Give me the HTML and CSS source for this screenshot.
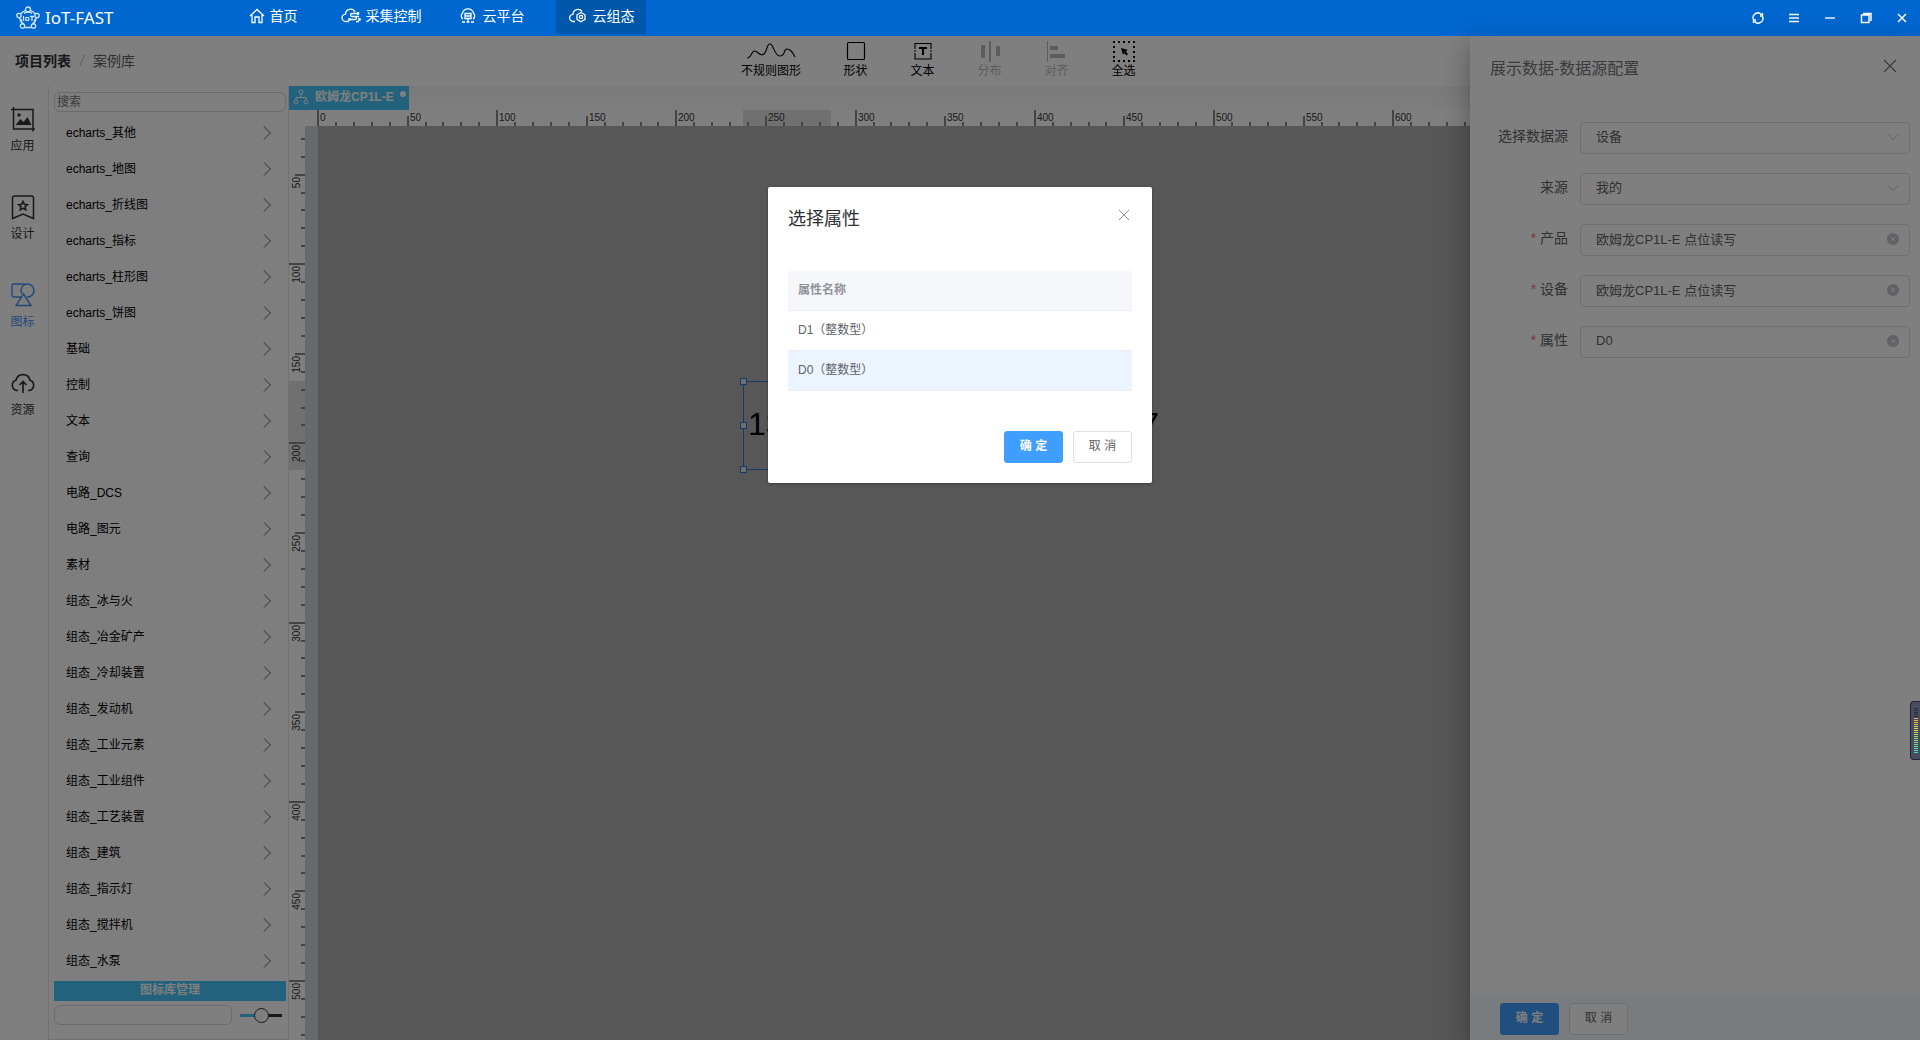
FILE: index.html
```html
<!DOCTYPE html>
<html lang="zh-CN">
<head>
<meta charset="utf-8">
<title>IoT-FAST</title>
<link rel="stylesheet" href="styles.css">
</head>
<body>
<header class="topbar">
  <a class="brand" href="#">
    <svg class="brand-icon" viewBox="0 0 24 24" fill="none" stroke="currentColor" stroke-width="1.300">
      <path d="M9 4.500L4 8M15 4.500L20 8M3.500 12L6 18M20.500 12L18 18M9 21.500h6M8 7.500c2-2 6-2 8 0M5 13c0 3 1 4 3 5M19 13c0 3-1 4-3 5"/>
      <circle cx="12" cy="3.500" r="2.500"/><circle cx="3" cy="9.500" r="2.200"/><circle cx="21" cy="9.500" r="2.200"/><circle cx="6.500" cy="20" r="2.200"/><circle cx="17.500" cy="20" r="2.200"/>
      <path d="M7.500 10v5M14 10.500h4M16 10.500V15"/><circle cx="11.300" cy="13" r="1.700"/>
    </svg>
    <span>IoT-FAST</span>
  </a>
  <nav class="nav">
    <a href="#"><svg viewBox="0 0 20 16" fill="none" stroke="currentColor" stroke-width="1.300"><path d="M5 8L12 1.500 19 8M7 7v7.500h3V9h4v5.500h3V7"/></svg>首页</a>
    <a href="#"><svg viewBox="0 0 20 16" fill="none" stroke="currentColor" stroke-width="1.300"><path d="M8 13.500H5a3.700 3.700 0 0 1-.5-7.400A5 5 0 0 1 14 4M16 5.500h-5a1.500 1.500 0 0 0 0 3h3a1.500 1.500 0 0 1 0 3H9M15 8.500h3M15 13.500h3"/><circle cx="17" cy="5.500" r=".8"/><circle cx="8.500" cy="11.500" r=".8"/><circle cx="18.500" cy="11.500" r=".8"/></svg>采集控制</a>
    <a href="#"><svg viewBox="0 0 20 16" fill="none" stroke="currentColor" stroke-width="1.300"><path d="M5 11A3.800 3.800 0 0 1 4.500 5 5.700 5.700 0 0 1 15.500 5 3.800 3.800 0 0 1 15 11M7 5.500h6v5H7zM7 8h6M10 10.500v3M4 14h3M8.500 14h3M13 14h3"/></svg>云平台</a>
    <a href="#" class="active"><svg viewBox="0 0 20 16" fill="none" stroke="currentColor" stroke-width="1.300"><path d="M7 13.500H5.500A3.600 3.600 0 0 1 5 6.300 5 5 0 0 1 14 3.500M13 4.500l4 2.300v4.600l-4 2.300-4-2.300V6.800z"/><circle cx="13" cy="9" r="1.600"/></svg>云组态</a>
  </nav>
  <div class="window-tools">
    <button aria-label="刷新"><svg viewBox="0 0 12 12" fill="none" stroke="currentColor" stroke-width="1.400"><path d="M1.500 7.500A4.700 4.700 0 0 1 9.500 2.700M10.500 4.500A4.700 4.700 0 0 1 2.500 9.300M10.500 1v3H8M1.500 11V8H4"/></svg></button>
    <button aria-label="菜单"><svg viewBox="0 0 12 12" fill="none" stroke="currentColor" stroke-width="1.300"><path d="M1 2.500h10M1 6h10M1 9.500h10"/></svg></button>
    <button aria-label="最小化"><svg viewBox="0 0 12 12" fill="none" stroke="currentColor" stroke-width="1.400"><path d="M1 6h10"/></svg></button>
    <button aria-label="还原"><svg viewBox="0 0 12 12" fill="none" stroke="currentColor" stroke-width="1.500"><path d="M1.500 3h7.500v7.500H1.500zM3 1.500h8V9"/></svg></button>
    <button aria-label="关闭"><svg viewBox="0 0 12 12" fill="none" stroke="currentColor" stroke-width="1.500"><path d="M2 2l8 8M10 2l-8 8"/></svg></button>
  </div>
</header>

<main class="workspace">
  <div class="toolbar">
    <div class="crumbs"><a href="#">项目列表</a><i>/</i><span>案例库</span></div>
    <div class="tools">
      <button class="wide"><svg viewBox="0 0 50 24" width="50" height="24" fill="none" stroke="currentColor" stroke-width="1.100"><path d="M1 19C6 19 5 11 9 12S14 18 18 15 20 5 24 5 28 17 34 17 37 10 41 10 47 14 49 18"/></svg>不规则图形</button>
      <button><svg viewBox="0 0 24 24" width="24" height="24" fill="none" stroke="currentColor" stroke-width="1.200"><rect x="3.500" y="3.500" width="17" height="17" rx="1"/></svg>形状</button>
      <button><svg viewBox="0 0 24 24" width="24" height="24" fill="none" stroke="currentColor" stroke-width="1.100"><path d="M4 10V4.500h16V10M4 14v6h16v-6M3 12h2M19 12h2"/><path stroke-width="2" d="M8 9h8M12 9v7"/></svg>文本</button>
      <button disabled><svg viewBox="0 0 24 24" width="24" height="24" fill="currentColor"><path d="M3 6h4v13H3zM11 2h2v21h-2zM18 7h4v10h-4z"/></svg>分布</button>
      <button disabled><svg viewBox="0 0 24 24" width="24" height="24" fill="currentColor"><path d="M2 2h1v21H2zM5 7h8v4H5zM5 15h15v4H5z"/></svg>对齐</button>
      <button><svg viewBox="0 0 24 24" width="24" height="24" fill="none" stroke="currentColor" stroke-width="2"><path stroke-dasharray="2 3" d="M1 3h22M1 22h22M2 2v21M22 2v21"/><path fill="currentColor" stroke="none" d="M9 9l7 2-2.300 1.300L16 15l-1.500 1.500L12 14l-1 2z"/></svg>全选</button>
    </div>
  </div>

  <div class="body">
    <nav class="rail">
      <a href="#"><svg viewBox="0 0 24 24" fill="none" stroke="currentColor" stroke-width="1.500"><path d="M2.500 0v22H24M0 2.500h22v22"/><path fill="currentColor" stroke="none" d="M4.500 18l5-6 3 3 4-5 4 8z"/><circle cx="8" cy="8" r="1.700" fill="currentColor" stroke="none"/></svg>应用</a>
      <a href="#"><svg viewBox="0 0 24 24" fill="none" stroke="currentColor" stroke-width="1.500"><path d="M1.500 2.500a2 2 0 0 1 2-1.500h17a2 2 0 0 1 2 1.500V23.500L12 19 1.500 23.500z"/><path stroke-width="1.600" d="M12 6.500l1.300 2.800 3 .4-2.200 2 .6 3-2.700-1.400-2.700 1.400.6-3-2.200-2 3-.4z"/></svg>设计</a>
      <a href="#" class="active"><svg viewBox="0 0 24 24" fill="none" stroke="currentColor" stroke-width="1.400"><path d="M10 14H2.500a1.500 1.500 0 0 1-1.500-1.500v-10A1.500 1.500 0 0 1 2.500 1H14M12.500 11L20 22.500H5z"/><path d="M11 11A6.500 6.500 0 1 1 16 14"/></svg>图标</a>
      <a href="#"><svg viewBox="0 0 24 24" fill="none" stroke="currentColor" stroke-width="1.700"><path d="M7 19.500H6A5.300 5.300 0 0 1 5 9.200a7.200 7.200 0 0 1 14 0 5.300 5.300 0 0 1-1 10.300h-1M12 22V11M8.500 14l3.500-3.500 3.500 3.500"/></svg>资源</a>
    </nav>

    <aside class="library">
      <input class="search" type="text" placeholder="搜索" aria-label="搜索">
      <ul class="groups">
        <li>echarts_其他</li><li>echarts_地图</li><li>echarts_折线图</li><li>echarts_指标</li><li>echarts_柱形图</li><li>echarts_饼图</li>
        <li>基础</li><li>控制</li><li>文本</li><li>查询</li><li>电路_DCS</li><li>电路_图元</li><li>素材</li>
        <li>组态_冰与火</li><li>组态_冶金矿产</li><li>组态_冷却装置</li><li>组态_发动机</li><li>组态_工业元素</li><li>组态_工业组件</li><li>组态_工艺装置</li><li>组态_建筑</li><li>组态_指示灯</li><li>组态_搅拌机</li><li>组态_水泵</li>
      </ul>
      <button class="manage">图标库管理</button>
      <div class="library-foot">
        <input type="text" aria-label="名称">
        <input class="size" type="range" min="0" max="100" value="50" aria-label="图标大小">
      </div>
    </aside>

    <section class="editor">
      <div class="tabs">
        <button class="tab"><svg viewBox="0 0 16 16" width="16" height="16" fill="none" stroke="currentColor"><circle cx="8" cy="3" r="2"/><circle cx="3" cy="13" r="2"/><circle cx="13" cy="13" r="2"/><path d="M8 5v3.500M3 11V8.500h10V11"/></svg><span>欧姆龙CP1L-E</span><i></i></button>
      </div>
      <svg class="ruler-x" id="ruler-x"></svg>
      <div class="stage">
        <svg class="ruler-y" id="ruler-y"></svg>
        <div class="canvas">
          <div class="shape">
            <div class="value"><span>13</span><span>7</span></div>
            <b class="h nw"></b><b class="h w"></b><b class="h sw"></b>
          </div>
        </div>
      </div>
    </section>
  </div>

  <aside class="drawer">
    <div class="drawer-head">
      <h2>展示数据-数据源配置</h2>
      <button class="close" aria-label="关闭"><svg viewBox="0 0 14 14" width="14" height="14" fill="none" stroke="currentColor" stroke-width="1.200"><path d="M1 1l12 12M13 1L1 13"/></svg></button>
    </div>
    <form class="form">
      <label for="f1">选择数据源</label><div class="field"><select id="f1"><option>设备</option></select><svg viewBox="0 0 12 12" fill="none" stroke="currentColor"><path d="M1 3.500l5 5 5-5"/></svg></div>
      <label for="f2">来源</label><div class="field"><select id="f2"><option>我的</option></select><svg viewBox="0 0 12 12" fill="none" stroke="currentColor"><path d="M1 3.500l5 5 5-5"/></svg></div>
      <label for="f3" class="required">产品</label><div class="field"><input id="f3" type="text" value="欧姆龙CP1L-E 点位读写"><svg class="clear" viewBox="0 0 12 12"><circle cx="6" cy="6" r="6"/><path d="M4.200 4.200l3.600 3.600M7.800 4.200L4.200 7.800"/></svg></div>
      <label for="f4" class="required">设备</label><div class="field"><input id="f4" type="text" value="欧姆龙CP1L-E 点位读写"><svg class="clear" viewBox="0 0 12 12"><circle cx="6" cy="6" r="6"/><path d="M4.200 4.200l3.600 3.600M7.800 4.200L4.200 7.800"/></svg></div>
      <label for="f5" class="required">属性</label><div class="field"><input id="f5" type="text" value="D0"><svg class="clear" viewBox="0 0 12 12"><circle cx="6" cy="6" r="6"/><path d="M4.200 4.200l3.600 3.600M7.800 4.200L4.200 7.800"/></svg></div>
    </form>
    <div class="drawer-foot"><button class="btn primary">确 定</button><button class="btn">取 消</button></div>
  </aside>

  <div class="mask">
    <div class="dialog" role="dialog" aria-labelledby="dlg-title">
      <div class="dialog-head">
        <h2 id="dlg-title">选择属性</h2>
        <button class="close" aria-label="关闭"><svg viewBox="0 0 12 12" width="12" height="12" fill="none" stroke="currentColor"><path d="M1 1l10 10M11 1L1 11"/></svg></button>
      </div>
      <table>
        <thead><tr><th>属性名称</th></tr></thead>
        <tbody><tr><td>D1（整数型）</td></tr><tr class="current"><td>D0（整数型）</td></tr></tbody>
      </table>
      <div class="dialog-foot"><button class="btn primary">确 定</button><button class="btn">取 消</button></div>
    </div>
  </div>
  <div class="meter"><i></i></div>
</main>
<script src="rulers.js"></script>
</body>
</html>
```
FILE: styles.css
```css
* { box-sizing: border-box; }
html, body { height: 100%; }
body {
  margin: 0;
  display: flex;
  flex-direction: column;
  overflow: hidden;
  font: 12px/16px "Liberation Sans", "Noto Sans CJK SC", sans-serif;
  color: #000;
  background: #fff;
}
button, input, select { font: inherit; color: inherit; margin: 0; }
button { border: 0; padding: 0; background: none; }
a { color: inherit; text-decoration: none; }
h2 { margin: 0; font-weight: 400; }
svg { flex: none; }

/* top bar */
.topbar { display: flex; flex: none; height: 36px; background: #0067d1; color: #fff; }
.brand { display: flex; align-items: center; gap: 5px; width: 226px; padding-left: 16px; font: 17px/24px "Noto Sans", sans-serif; }
.brand-icon { width: 24px; height: 24px; color: #cfe4fb; }
.nav { display: flex; flex: 1; height: 34px; gap: 20px; }
.nav a { display: flex; align-items: center; justify-content: center; gap: 5px; min-width: 90px; padding-bottom: 2px; font-size: 14px; line-height: 20px; }
.nav svg { width: 20px; height: 16px; }
.nav a.active { background: #0057ac; }
.window-tools { display: flex; align-items: center; gap: 24px; padding-right: 12px; }
.window-tools button { width: 12px; height: 12px; }
.window-tools svg { display: block; width: 12px; height: 12px; }

/* toolbar */
.workspace { position: relative; display: flex; flex: 1; flex-direction: column; min-height: 0; }
.toolbar { display: flex; flex: none; height: 50px; }
.crumbs { display: flex; align-items: center; gap: 9px; width: 730px; padding-left: 15px; font-size: 14px; line-height: 20px; color: #606266; }
.crumbs a { font-weight: 700; color: #303133; }
.crumbs i { color: #c0c4cc; }
.tools { display: flex; gap: 20px; }
.tools button { display: flex; flex-direction: column; align-items: center; width: 47px; padding-top: 3px; line-height: 16px; }
.tools button.wide { width: 82px; }
.tools button:disabled { color: #bbb; }

/* left rail and icon library */
.body { display: flex; flex: 1; min-height: 0; }
.rail { display: flex; flex-direction: column; gap: 40px; width: 48px; padding-top: 21px; color: #333; }
.rail a { display: flex; flex-direction: column; align-items: center; gap: 6px; height: 48px; padding-right: 3px; line-height: 18px; }
.rail svg { width: 24px; height: 24px; overflow: visible; }
.rail .active { color: #4590f0; }
.library { display: flex; flex-direction: column; width: 241px; padding: 6px 2px 0 5px; border: solid #e4e4e4; border-width: 0 1px 1px; }
.library input[type="text"] { height: 20px; padding: 0 2px; border: 1px solid #d4d7dd; border-radius: 6px; background: #fff; }
.library .search::placeholder { color: #757575; opacity: 1; }
.groups { flex: 1; min-height: 0; margin: 5px 0 0; padding: 0; overflow: hidden; list-style: none; }
.groups li { display: flex; align-items: center; justify-content: space-between; height: 36px; padding: 0 17px 4px 12px; border-bottom: 1px solid #fff; background: #fdfdfd; }
.groups li::after { content: ""; width: 9px; height: 9px; border: solid #909399; border-width: 1px 1px 0 0; transform: rotate(45deg); }
.manage { height: 20px; padding-bottom: 2px; color: #fff; background: #46c5fb; font-weight: 700; line-height: 16px; }
.library-foot { display: flex; align-items: center; gap: 8px; height: 38px; padding: 0 4px 10px 0; }
.library-foot input[type="text"] { width: 178px; }
.size { flex: 1; width: 40px; height: 16px; appearance: none; background: none; }
.size::-webkit-slider-runnable-track { height: 3px; background: linear-gradient(90deg, #46c5fb 50%, #333 50%); }
.size::-webkit-slider-thumb { appearance: none; width: 15px; height: 15px; margin-top: -6px; border: 1px solid #333; border-radius: 50%; background: #fff; }

/* editor */
.editor { display: flex; flex: 1; flex-direction: column; min-width: 0; }
.tabs { display: flex; height: 24px; background: linear-gradient(#f4f4f4, #fbfbfb); }
.tab { display: flex; gap: 6px; width: 120px; padding: 3px 3px 3px 4px; color: #fff; background: #46c5fb; line-height: 16px; }
.tab span { flex: 1; font-weight: 700; text-align: left; white-space: nowrap; }
.tab i { width: 6px; height: 6px; margin-top: 2px; border-radius: 50%; background: #fff; }
.ruler-x { width: 100%; height: 16px; }
.stage { display: flex; flex: 1; min-height: 0; }
.ruler-y { width: 16px; height: 100%; }
.ruler-x, .ruler-y { overflow: hidden; font-size: 10px; fill: #333; }
.canvas { position: relative; flex: 1; border-left: 13px solid #cbd5dd; background: #aeaeae; }
.shape { position: absolute; left: 425px; top: 255px; width: 400px; height: 89px; padding: 24px 0 0 4px; border: 1px solid #2c74c8; font-size: 32px; line-height: 36px; }
.value { display: flex; justify-content: space-between; width: 411px; }
.h { position: absolute; left: -4px; width: 7px; height: 7px; border: 1px solid #2c74c8; background: #ddd; }
.nw { top: -4px; }
.w { top: 40px; }
.sw { bottom: -4px; }

/* data source drawer */
.drawer { position: absolute; top: 0; right: 0; bottom: 0; display: flex; flex-direction: column; width: 450px; background: #fff; box-shadow: 0 8px 10px -5px rgba(0,0,0,.2), 0 16px 24px 2px rgba(0,0,0,.14), 0 6px 30px 5px rgba(0,0,0,.12); color: #606266; }
.drawer-head { display: flex; align-items: flex-start; justify-content: space-between; height: 86px; padding: 23px 23px 0 20px; color: #72767b; }
.drawer-head h2 { font-size: 16px; line-height: 20px; }
.form { display: grid; flex: 1; grid-template-columns: 98px 1fr; grid-auto-rows: 32px; align-content: start; gap: 19px 12px; padding-right: 10px; font-size: 14px; line-height: 28px; }
.form label { text-align: right; }
.required::before { content: "* "; color: #f56c6c; }
.field { position: relative; font-size: 13px; color: #606266; }
.field input, .field select { width: 100%; height: 32px; padding: 0 15px 3px; border: 1px solid #dcdfe6; border-radius: 4px; background: #fff; appearance: none; }
.field svg { position: absolute; right: 11px; top: 9px; width: 12px; height: 12px; color: #c0c4cc; }
.clear circle { fill: #c0c4cc; }
.clear path { fill: none; stroke: #fff; }
.drawer-foot { display: flex; gap: 10px; height: 45px; padding: 8px 30px; background: #f2f9ff; }
.btn { width: 59px; height: 32px; padding-bottom: 2px; border: 1px solid #dcdfe6; border-radius: 3px; color: #606266; background: #fff; }
.btn.primary { border-color: #409eff; color: #fff; background: #409eff; font-weight: 700; }
.close { display: flex; }

/* property dialog */
.mask { position: absolute; inset: 0; display: flex; align-items: flex-start; justify-content: center; padding-top: 151px; background: rgba(0,0,0,.5); }
.dialog { width: 20%; min-width: 340px; padding: 20px; border-radius: 2px; background: #fff; box-shadow: 0 1px 3px rgba(0,0,0,.3); }
.dialog-head { display: flex; align-items: flex-start; justify-content: space-between; height: 64px; color: #303133; }
.dialog-head h2 { font-size: 18px; line-height: 24px; }
.dialog-head .close { padding: 2px; color: #909399; }
table { width: 100%; border-collapse: separate; border-spacing: 0; color: #606266; }
th, td { height: 40px; padding: 0 10px 2px; border-bottom: 1px solid #ebeef5; text-align: left; }
th { color: #909399; background: #f5f7fa; }
.current td { background: #ecf5ff; }
.dialog-foot { display: flex; justify-content: flex-end; gap: 10px; padding-top: 40px; }

/* level meter docked at the window edge */
.meter { position: absolute; right: 0; top: 665px; width: 10px; height: 59px; padding: 6px 2px 6px 3px; border: 1px solid #22252f; border-right: 0; border-radius: 4px 0 0 4px; background: #474c60; }
.meter i { display: block; width: 4px; height: 45px; background: repeating-linear-gradient(transparent 0 1px, #474c60 1px 2px), linear-gradient(#2a2d38 22%, #f5a742 22%, #e8d44d 45%, #8fdc78 70%, #45dcc0); }
```
FILE: rulers.js
```
// Rulers: one mark every 10 units, a longer one every 50, full height every 100.
const NS = "http://www.w3.org/2000/svg";
const SCALE = 1.792;
function add(parent, name, attrs, text) {
  const el = document.createElementNS(NS, name);
  for (const key in attrs) el.setAttribute(key, attrs[key]);
  if (text !== undefined) el.textContent = text;
  parent.appendChild(el);
}
function ruler(id, vertical, origin, first, last, selStart, selSize) {
  const svg = document.getElementById(id);
  add(svg, "rect", vertical
    ? { x: 0, y: selStart, width: 16, height: selSize, fill: "#e0e0e0" }
    : { x: selStart, y: 0, width: selSize, height: 16, fill: "#e0e0e0" });
  for (let v = first; v <= last; v += 10) {
    const p = Math.round(origin + v * SCALE);
    const len = v % 100 === 0 ? 16 : v % 50 === 0 ? 10 : 4;
    add(svg, "rect", vertical
      ? { x: 16 - len, y: p - 1, width: len, height: 2, fill: "#888" }
      : { x: p - 1, y: 16 - len, width: 2, height: len, fill: "#888" });
    if (v % 50 === 0) {
      if (vertical) add(svg, "text", { transform: `translate(11 ${p + 2}) rotate(-90)`, "text-anchor": "end" }, v);
      else add(svg, "text", { x: p + 2, y: 11 }, v);
    }
  }
}
ruler("ruler-x", false, 29, 0, 880, 454, 88);
ruler("ruler-y", true, -41, 30, 530, 255, 89);
```
